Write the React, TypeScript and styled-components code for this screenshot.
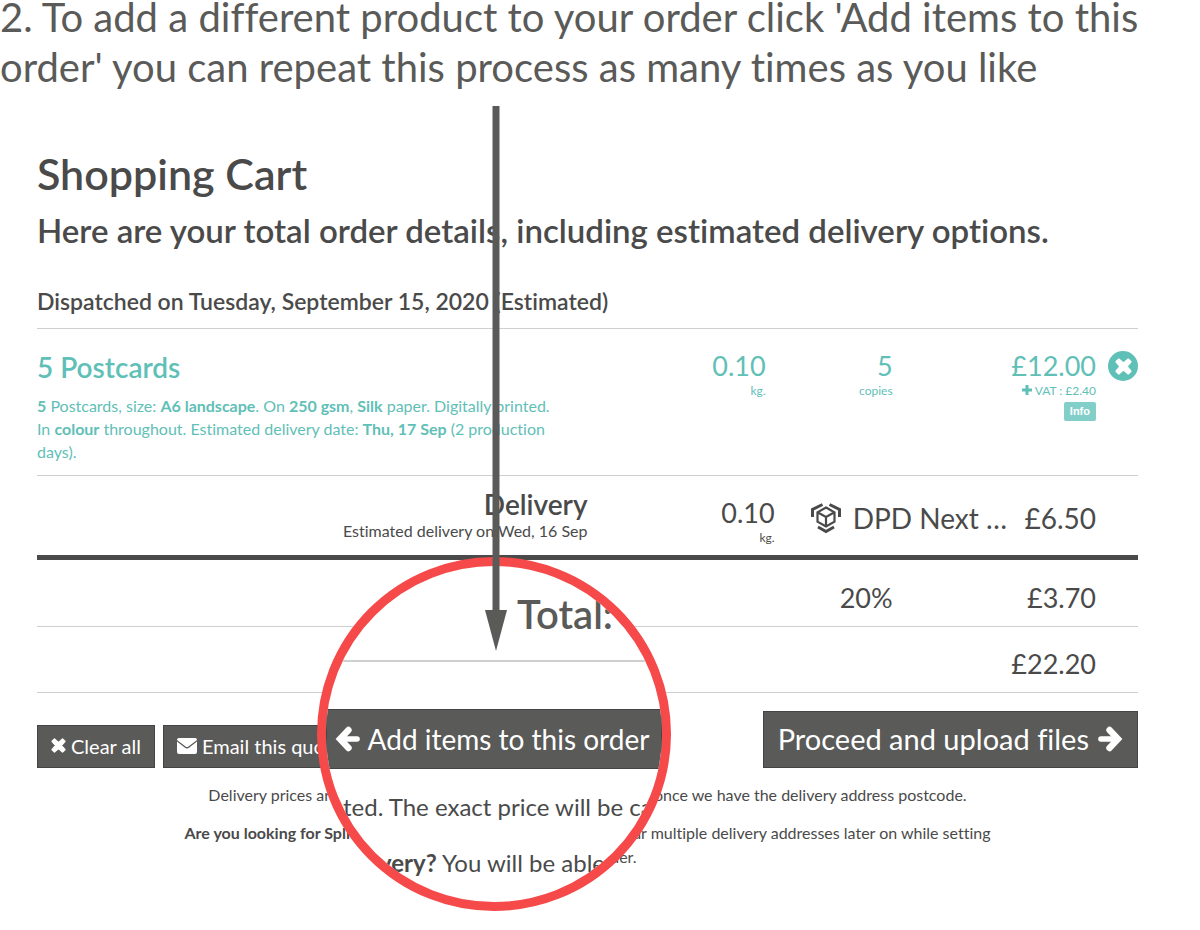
import React from 'react';
import styled, { createGlobalStyle } from 'styled-components';

const ink = '#4a4a4a';
const slate = '#5a5a58';
const teal = '#5fc0b7';
const red = '#f64a4a';
const rule = '#cfcfcf';

const GlobalStyle = createGlobalStyle`
  body {
    margin: 0;
    background: #fff;
    color: ${ink};
    font-family: Lato, 'Open Sans', sans-serif;
    font-variant-ligatures: none;
  }
  *, *::before, *::after { box-sizing: border-box; }
  button { font-variant-ligatures: none; }
`;

const Page = styled.div`
  position: relative;
  min-height: 930px;
  overflow: hidden;
`;

const Instruction = styled.p`
  margin: -8px 0 0;
  font-size: 40px;
  line-height: 50px;
  color: ${slate};
`;

const Cart = styled.main`
  padding: 54px 62px 0 37px;
`;

const Title = styled.h1`
  margin: 0;
  font-size: 43px;
  line-height: 56px;
  font-weight: 600;
`;

const Subtitle = styled.h2`
  margin: 0;
  font-size: 33px;
  line-height: 56px;
  font-weight: 600;
`;

const Dispatch = styled.h3`
  margin: 31px 0 15px;
  font-size: 23px;
  line-height: 24px;
  font-weight: 600;
`;

const Lines = styled.table`
  width: 100%;
  table-layout: fixed;
  border-collapse: collapse;
`;

const LabelColumn = styled.col`
  width: 50%;
`;

const WeightColumn = styled.col`
  width: 17%;
`;

const CountColumn = styled.col`
  width: 118px;
`;

const RemoveColumn = styled.col`
  width: 42px;
`;

const Row = styled.tr<{ $height: number; $tone?: string; $heavy?: boolean }>`
  height: ${p => p.$height}px;
  color: ${p => p.$tone ?? ink};
  border-top: 1px solid ${rule};
  border-bottom: ${p => (p.$heavy ? `5px solid ${ink}` : `1px solid ${rule}`)};
`;

const Cell = styled.td<{ $top: number; $end?: number }>`
  padding: ${p => p.$top}px ${p => p.$end ?? 0}px 0 0;
  vertical-align: top;
  text-align: right;
`;

const ItemCell = styled(Cell)`
  text-align: left;
`;

const ItemName = styled.h4`
  margin: 0 0 10px;
  font-size: 28px;
  line-height: 34px;
  font-weight: 600;
`;

const ItemText = styled.p`
  margin: 0;
  font-size: 16px;
  line-height: 23px;
`;

const Amount = styled.div`
  font-size: 27px;
  line-height: 34px;
`;

const Note = styled.div`
  font-size: 12px;
  line-height: 15px;
`;

const DeliveryName = styled.div`
  font-size: 28px;
  line-height: 34px;
  font-weight: 600;
`;

const DeliveryText = styled.div`
  font-size: 16px;
  line-height: 20px;
`;

const Courier = styled.div`
  display: flex;
  align-items: center;
  gap: 12px;
  padding-left: 36px;
  font-size: 28px;
  line-height: 34px;
`;

const CourierName = styled.span`
  flex: 1;
  text-align: left;
  white-space: nowrap;
`;

const InfoButton = styled.button`
  margin-top: 4px;
  padding: 0 6px;
  border: 0;
  border-radius: 2px;
  background: #82cfc9;
  color: #fff;
  font: bold 11px/19px 'Liberation Sans', sans-serif;
`;

const RemoveButton = styled.button`
  display: inline-flex;
  align-items: center;
  justify-content: center;
  width: 30px;
  height: 30px;
  padding: 0;
  border: 0;
  border-radius: 50%;
  background: ${teal};
  color: #fff;
`;

const Actions = styled.div`
  display: flex;
  align-items: flex-end;
  gap: 8px;
  margin-top: 18px;
`;

const ActionButton = styled.button<{ $large?: boolean }>`
  display: flex;
  align-items: center;
  gap: ${p => (p.$large ? 9 : 5)}px;
  height: ${p => (p.$large ? 57 : 43)}px;
  margin-left: ${p => (p.$large ? 'auto' : 0)};
  padding: 0 ${p => (p.$large ? 14 : 13)}px 2px;
  border: 1px solid #444;
  background: ${slate};
  color: #fff;
  font-family: inherit;
  font-size: ${p => (p.$large ? 29 : 20)}px;
  white-space: nowrap;
`;

const Footnotes = styled.div`
  max-width: 820px;
  margin: 15px auto 0;
  font-size: 16px;
  line-height: 24px;
  text-align: center;

  p { margin: 0 0 14px; }
`;

const Lens = styled.section`
  position: absolute;
  top: 557px;
  left: calc(41% + 2px);
  width: 354px;
  height: 354px;
  transform: translateX(-50%);
  border: 9px solid ${red};
  border-radius: 50%;
  overflow: hidden;
  background: #fff;
`;

const LensTotal = styled.div`
  height: 96px;
  padding: 24px 0 0 191px;
  border-bottom: 2px solid ${rule};
  font-size: 40px;
  line-height: 48px;
  font-weight: 600;
  color: ${slate};
`;

const LensButton = styled.button`
  display: flex;
  align-items: center;
  justify-content: center;
  gap: 8px;
  width: 100%;
  height: 60px;
  margin: 47px 0 20px;
  padding: 0 4px 0 0;
  border: 1px solid #444;
  background: ${slate};
  color: #fff;
  font-family: inherit;
  font-size: 28px;
  white-space: nowrap;
`;

const LensText = styled.p`
  display: flex;
  justify-content: center;
  margin: 0 0 20px;
  padding-right: 4px;
  font-size: 24px;
  line-height: 36px;
  white-space: pre;
`;

const Pointer = styled.svg`
  position: absolute;
  top: 106px;
  left: calc(41% + 4px);
  transform: translateX(-50%);
`;

const CrossIcon = ({ size }: { size: number }) => (
  <svg width={size} height={size} viewBox="0 0 16 16" aria-hidden="true">
    <path
      d="M3.600 1.400 L8 5.200 L12.400 1.400 L14.600 3.600 L10.800 8 L14.600 12.400 L12.400 14.600 L8 10.800 L3.600 14.600 L1.400 12.400 L5.200 8 L1.400 3.600 Z"
      fill="currentColor"
      stroke="currentColor"
      strokeWidth="2"
      strokeLinejoin="round"
    />
  </svg>
);

const PlusIcon = () => (
  <svg width="10" height="10" viewBox="0 0 10 10" aria-hidden="true">
    <path d="M5 0 V10 M0 5 H10" stroke="currentColor" strokeWidth="3" />
  </svg>
);

const EnvelopeIcon = () => (
  <svg width="20" height="16" viewBox="0 0 20 16" aria-hidden="true">
    <path d="M2 0 H18 Q20 0 20 2 L11.5 8.6 Q10 9.6 8.5 8.6 L0 2 Q0 0 2 0 Z" fill="currentColor" />
    <path d="M0 3.600 L8 9.800 Q10 11.200 12 9.800 L20 3.600 V14 Q20 16 18 16 H2 Q0 16 0 14 Z" fill="currentColor" />
  </svg>
);

const ArrowIcon = ({ left }: { left?: boolean }) => (
  <svg width="25" height="26" viewBox="0 0 25 26" aria-hidden="true">
    <g transform={left ? 'matrix(-1 0 0 1 25 0)' : undefined} fill="none" stroke="currentColor" strokeLinecap="round">
      <path d="M3 13 H18" strokeWidth="5.600" />
      <path d="M11.500 4 L20 13 L11.500 22" strokeWidth="6.400" />
    </g>
  </svg>
);

const ParcelIcon = () => (
  <svg width="30" height="31" viewBox="0 0 30 31" fill="none" stroke="currentColor" aria-hidden="true">
    <path d="M15 4.500 L23.500 9.300 V18.700 L15 23.500 L6.500 18.700 V9.300 Z M6.500 9.300 L15 14 L23.500 9.300 M15 14 V23.500" strokeWidth="2.200" />
    <path d="M1.500 14 V6.500 L11.500 1.500 M28.500 14 V6.500 L18.500 1.500 M7 24 L15 28.500 L23 24" strokeWidth="3" />
  </svg>
);

export default function App() {
  return (
    <Page>
      <GlobalStyle />
      <Instruction>
        2. To add a different product to your order click 'Add items to this
        <br />
        order' you can repeat this process as many times as you like
      </Instruction>
      <Cart>
        <Title>Shopping Cart</Title>
        <Subtitle>Here are your total order details, including estimated delivery options.</Subtitle>
        <Dispatch>Dispatched on Tuesday, September 15, 2020 (Estimated)</Dispatch>
        <Lines>
          <colgroup>
            <LabelColumn />
            <WeightColumn />
            <CountColumn />
            <col />
            <RemoveColumn />
          </colgroup>
          <tbody>
            <Row $height={147} $tone={teal}>
              <ItemCell $top={21} $end={24}>
                <ItemName>5 Postcards</ItemName>
                <ItemText>
                  <b>5</b> Postcards, size: <b>A6 landscape</b>. On <b>250 gsm</b>, <b>Silk</b> paper. Digitally printed.
                  In <b>colour</b> throughout. Estimated delivery date: <b>Thu, 17 Sep</b> (2 production days).
                </ItemText>
              </ItemCell>
              <Cell $top={20} $end={9}><Amount>0.10</Amount><Note>kg.</Note></Cell>
              <Cell $top={20}><Amount>5</Amount><Note>copies</Note></Cell>
              <Cell $top={20}>
                <Amount>£12.00</Amount>
                <Note><PlusIcon /> VAT : £2.40</Note>
                <InfoButton>Info</InfoButton>
              </Cell>
              <Cell $top={22}>
                <RemoveButton aria-label="Remove item"><CrossIcon size={17} /></RemoveButton>
              </Cell>
            </Row>
            <Row $height={82} $heavy>
              <Cell $top={11}>
                <DeliveryName>Delivery</DeliveryName>
                <DeliveryText>Estimated delivery on Wed, 16 Sep</DeliveryText>
              </Cell>
              <Cell $top={20}><Amount>0.10</Amount><Note>kg.</Note></Cell>
              <Cell $top={25} colSpan={2}>
                <Courier><ParcelIcon /><CourierName>DPD Next …</CourierName>£6.50</Courier>
              </Cell>
              <td />
            </Row>
            <Row $height={69}>
              <td colSpan={2} />
              <Cell $top={21}><Amount>20%</Amount></Cell>
              <Cell $top={21}><Amount>£3.70</Amount></Cell>
              <td />
            </Row>
            <Row $height={66}>
              <td colSpan={3} />
              <Cell $top={20}><Amount>£22.20</Amount></Cell>
              <td />
            </Row>
          </tbody>
        </Lines>
        <Actions>
          <ActionButton><CrossIcon size={15} />Clear all</ActionButton>
          <ActionButton><EnvelopeIcon />Email this quote</ActionButton>
          <ActionButton $large>Proceed and upload files<ArrowIcon /></ActionButton>
        </Actions>
        <Footnotes>
          <p>Delivery prices are estimated. The exact price will be calculated once we have the delivery address postcode.</p>
          <p><b>Are you looking for Split Delivery?</b> You will be able to specify your multiple delivery addresses later on while setting up your order.</p>
        </Footnotes>
      </Cart>
      <Lens>
        <LensTotal>Total:</LensTotal>
        <LensButton><ArrowIcon left />Add items to this order</LensButton>
        <LensText>ated. The exact price will be ca</LensText>
        <LensText><b>very?</b> You will be able</LensText>
      </Lens>
      <Pointer width="22" height="545" viewBox="0 0 22 545" fill={slate} aria-hidden="true">
        <path d="M7.500 0 H14.500 V504 H22 L11 545 L0 504 H7.500 Z" />
      </Pointer>
    </Page>
  );
}
